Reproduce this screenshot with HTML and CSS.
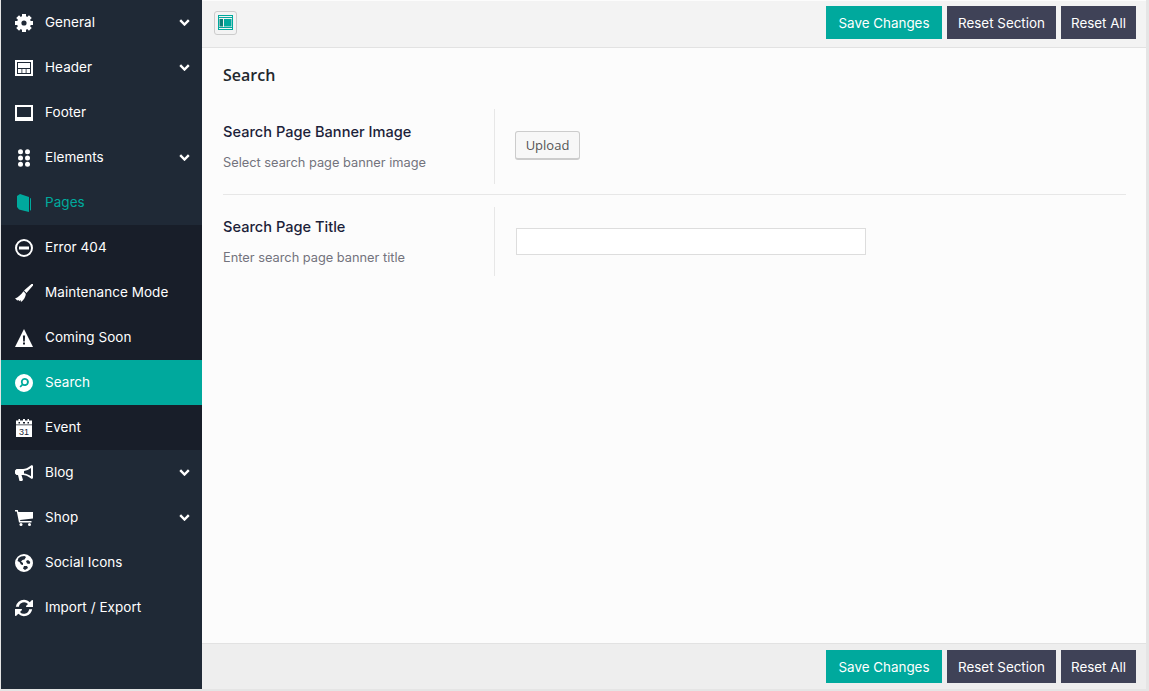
FILE: index.html
```html
<!DOCTYPE html>
<html lang="en">
<head>
    <meta charset="UTF-8">
    <meta name="viewport" content="width=device-width, initial-scale=1.0">
    <title>Theme Options</title>
    <link rel="stylesheet" href="styles.css">
</head>
<body>
    <div class="panel">
        <nav class="sidebar">
            <a class="nav-item">
                <svg class="nav-icon" viewBox="0 0 18 18"><circle class="gear-ring" cx="9" cy="9" r="4.800"/><path d="M7 0h4v3.500H7zM7 14.500h4V18H7z"/><path d="M7 0h4v3.500H7zM7 14.500h4V18H7z" transform="rotate(45 9 9)"/><path d="M7 0h4v3.500H7zM7 14.500h4V18H7z" transform="rotate(90 9 9)"/><path d="M7 0h4v3.500H7zM7 14.500h4V18H7z" transform="rotate(135 9 9)"/></svg>
                <span class="nav-label">General</span>
                <svg class="nav-arrow" viewBox="0 0 11 7"><path d="M1.200 1.200 5.500 5.500 9.800 1.200"/></svg>
            </a>
            <a class="nav-item">
                <svg class="nav-icon" viewBox="0 0 18 16"><path fill-rule="evenodd" d="M0 0h18v16H0zM2 2v12h14V2zM3 3h12v5H3zM3 9h3.500v4H3zM7.300 9h3.400v4H7.300zM11.500 9H15v4h-3.500z"/></svg>
                <span class="nav-label">Header</span>
                <svg class="nav-arrow" viewBox="0 0 11 7"><path d="M1.200 1.200 5.500 5.500 9.800 1.200"/></svg>
            </a>
            <a class="nav-item">
                <svg class="nav-icon" viewBox="0 0 18 16"><path fill-rule="evenodd" d="M0 0h18v16H0zM2 2v10h14V2z"/></svg>
                <span class="nav-label">Footer</span>
            </a>
            <a class="nav-item">
                <svg class="nav-icon" viewBox="0 0 18 18"><circle cx="5.500" cy="2.800" r="2.500"/><circle cx="12.500" cy="2.800" r="2.500"/><circle cx="5.500" cy="9" r="2.500"/><circle cx="12.500" cy="9" r="2.500"/><circle cx="5.500" cy="15.200" r="2.500"/><circle cx="12.500" cy="15.200" r="2.500"/></svg>
                <span class="nav-label">Elements</span>
                <svg class="nav-arrow" viewBox="0 0 11 7"><path d="M1.200 1.200 5.500 5.500 9.800 1.200"/></svg>
            </a>
            <a class="nav-item nav-open">
                <svg class="nav-icon" viewBox="0 0 18 18"><path d="M2 2 5 0l9 3v15L4 15.500 2 13zM15 4l1 .5V16l-1 .8z"/></svg>
                <span class="nav-label">Pages</span>
            </a>
            <div class="subnav">
                <a class="nav-item">
                    <svg class="nav-icon" viewBox="0 0 18 18"><path fill-rule="evenodd" d="M9 0a9 9 0 1 1 0 18A9 9 0 0 1 9 0zm0 2a7 7 0 1 0 0 14A7 7 0 0 0 9 2zM4 7.500h10v3H4z"/></svg>
                    <span class="nav-label">Error 404</span>
                </a>
                <a class="nav-item">
                    <svg class="nav-icon" viewBox="0 0 18 18"><path d="M18 0v1.500L11.500 9 9 6.500 16.500 0zM8.500 7.300l2.300 2.500c0 3-2.300 6.700-4.800 8.200l-.5-2-1.300 1.300-.7-1.300-1.300.6L1 15.200 0 14.500c3-1 6-3.500 8.500-7.200z"/></svg>
                    <span class="nav-label">Maintenance Mode</span>
                </a>
                <a class="nav-item">
                    <svg class="nav-icon" viewBox="0 0 18 18"><path fill-rule="evenodd" d="M9 0l9 18H0zM7.900 6.500l.3 6h1.600l.3-6zM8 13.500v2h2v-2z"/></svg>
                    <span class="nav-label">Coming Soon</span>
                </a>
                <a class="nav-item nav-active">
                    <svg class="nav-icon" viewBox="0 0 18 18"><path fill-rule="evenodd" d="M9 0a9 9 0 1 1 0 18A9 9 0 0 1 9 0zm.8 4a4 4 0 0 0-3.300 6.300L4.500 12.500l1.200 1.100 2.100-2.200A4 4 0 1 0 9.800 4zm0 1.800a2.200 2.200 0 1 1 0 4.400 2.200 2.200 0 0 1 0-4.400z"/></svg>
                    <span class="nav-label">Search</span>
                </a>
                <a class="nav-item">
                    <svg class="nav-icon" viewBox="0 0 16 18"><path fill-rule="evenodd" d="M0 1.500h2.500V0h1.500v1.500h3V0h2v1.500h2.500V0h1.500v1.500H16V18H0zM2.500 3v1.500h1.500V3zM7 3v1.500h2V3zM11.500 3v1.500H13V3zM0 5.500v.8h16v-.8z"/><text class="cal-day" x="8" y="15.800" text-anchor="middle">31</text></svg>
                    <span class="nav-label">Event</span>
                </a>
            </div>
            <a class="nav-item">
                <svg class="nav-icon" viewBox="0 0 18 16"><path fill-rule="evenodd" d="M17 0l1 1v12l-1 1-1-.5C13 11 10 10 8 10H6.500l1.500 5-1 1H4.500L3 10H1.500L0 8.500v-3L1.500 4H8c2 0 5-1 8-3.500zM16 3c-2 1.500-4.500 2.500-7 3v2.500c2.500.3 5 1.300 7 2.800z"/></svg>
                <span class="nav-label">Blog</span>
                <svg class="nav-arrow" viewBox="0 0 11 7"><path d="M1.200 1.200 5.500 5.500 9.800 1.200"/></svg>
            </a>
            <a class="nav-item">
                <svg class="nav-icon" viewBox="0 0 18 16"><path d="M0 0h2.800l.5 2H18v6.500L5 10l.3 1h11.200v1.500H4L1.800 1.500H0z"/><circle cx="6" cy="14.500" r="1.500"/><circle cx="14.500" cy="14.500" r="1.500"/></svg>
                <span class="nav-label">Shop</span>
                <svg class="nav-arrow" viewBox="0 0 11 7"><path d="M1.200 1.200 5.500 5.500 9.800 1.200"/></svg>
            </a>
            <a class="nav-item">
                <svg class="nav-icon" viewBox="0 0 18 18"><path fill-rule="evenodd" d="M9 0a9 9 0 1 1 0 18A9 9 0 0 1 9 0zM6 2.500 3.500 4 2.500 7l2 1 1.500 2.500 2 .5V9l-2-1.500L7.500 6l2-.5L11 3 9.500 2zM13 6l-2 1 1 2.500 2.500.5.800-2zM9 12l-1 2.500 2 1.500 3-2-1-2z"/></svg>
                <span class="nav-label">Social Icons</span>
            </a>
            <a class="nav-item">
                <svg class="nav-icon" viewBox="0 0 18 18"><path d="M9 .8c2.300 0 4.300 1 5.700 2.400L17 1l1 .2v6.800h-6.800l-.2-1 2-2A5.200 5.200 0 0 0 3.900 7.800H.8A8.300 8.300 0 0 1 9 .8zM0 10h6.800l.2 1-2 2a5.200 5.200 0 0 0 9.100-2.800h3.100A8.300 8.300 0 0 1 3.300 14.800L1 17l-1-.2z"/></svg>
                <span class="nav-label">Import / Export</span>
            </a>
        </nav>
        <main class="content">
            <div class="bar bar-top">
                <button class="layout-toggle" type="button">
                    <svg viewBox="0 0 15 15" width="15" height="15"><path fill="#00a99d" fill-rule="evenodd" d="M0 0h15v15H0zM1 1v1h13V1zM1 3v9h13V3zM1 13v1h13v-1z"/><path fill="#00a99d" d="M6 4h7.500v7.500H6z"/><path fill="#0b7f78" d="M1.500 4H5v7.500H1.500z"/></svg>
                </button>
                <div class="bar-actions">
                    <button class="btn btn-save" type="button">Save Changes</button>
                    <button class="btn btn-reset btn-section" type="button">Reset Section</button>
                    <button class="btn btn-reset btn-all" type="button">Reset All</button>
                </div>
            </div>
            <div class="section">
                <h2 class="section-title">Search</h2>
                <div class="field">
                    <div class="field-info">
                        <h3 class="field-name">Search Page Banner Image</h3>
                        <p class="field-desc">Select search page banner image</p>
                    </div>
                    <div class="field-control field-control-upload">
                        <button class="upload" type="button">Upload</button>
                    </div>
                </div>
                <div class="field field-last">
                    <div class="field-info">
                        <h3 class="field-name">Search Page Title</h3>
                        <p class="field-desc">Enter search page banner title</p>
                    </div>
                    <div class="field-control">
                        <input class="text-input" type="text">
                    </div>
                </div>
            </div>
            <div class="bar bar-bottom">
                <div class="bar-actions">
                    <button class="btn btn-save" type="button">Save Changes</button>
                    <button class="btn btn-reset btn-section" type="button">Reset Section</button>
                    <button class="btn btn-reset btn-all" type="button">Reset All</button>
                </div>
            </div>
        </main>
    </div>
</body>
</html>
```

FILE: styles.css
```css
html, body {
    height: 100%;
}
body {
    margin: 0;
    overflow: hidden;
    background-color: #e5e5e5;
    font-family: "Inter", Arial, sans-serif;
    font-size: 13px;
}
.panel {
    display: flex;
    height: 689px;
    margin: 0 3px 0 1px;
}
.sidebar {
    width: 201px;
    flex-shrink: 0;
    background-color: #1f2936;
}
.nav-item {
    display: flex;
    align-items: center;
    height: 45px;
    padding: 0 12px 0 14px;
    color: #fff;
}
.nav-icon {
    width: 18px;
    height: 18px;
    margin-right: 12px;
    fill: #fff;
    flex-shrink: 0;
}
.nav-label {
    flex: 1;
    padding-bottom: 2px;
    font-size: 13.500px;
    letter-spacing: 0.05px;
}
.nav-arrow {
    width: 11px;
    height: 7px;
    fill: none;
    stroke: #fff;
    stroke-width: 2.400;
}
.gear-ring {
    fill: none;
    stroke: #fff;
    stroke-width: 4.400;
}
.nav-open {
    color: #00a99d;
}
.nav-open .nav-icon {
    fill: #00a99d;
}
.subnav {
    background-color: #181e29;
}
.nav-active {
    background-color: #00a99d;
}
.cal-day {
    font-family: "Liberation Sans", Arial, sans-serif;
    font-size: 9px;
    fill: #1c1f3a;
}
.content {
    flex: 1;
    display: flex;
    flex-direction: column;
    background-color: #fcfcfc;
}
.bar {
    display: flex;
    align-items: center;
    flex-shrink: 0;
    padding: 0 10px 0 12px;
}
.bar-top {
    height: 43px;
    margin-top: 1px;
    padding-bottom: 3px;
    justify-content: space-between;
    background-color: #f3f3f3;
    border-bottom: 1px solid #e2e2e2;
}
.bar-bottom {
    height: 45px;
    justify-content: flex-end;
    background-color: #eeeeee;
    border-top: 1px solid #e2e2e2;
}
.bar-actions {
    display: flex;
    gap: 5px;
}
.layout-toggle {
    display: flex;
    align-items: center;
    justify-content: center;
    width: 23px;
    height: 24px;
    padding: 0;
    background-color: #f3f3f3;
    border: 1px solid #cccccc;
    border-radius: 3px;
}
.btn {
    width: 116px;
    height: 33px;
    padding: 0;
    border: none;
    color: #fff;
    font-family: "Inter", Arial, sans-serif;
    font-size: 13.400px;
}
.btn-save {
    background-color: #00a99d;
}
.btn-reset {
    background-color: #3f4257;
}
.btn-section {
    width: 109px;
}
.btn-all {
    width: 75px;
}
.section {
    flex: 1;
    padding: 0 20px 0 21px;
}
.section-title {
    margin: 17px 0 24px;
    color: #23282d;
    font-family: "Open Sans", Arial, sans-serif;
    font-size: 16px;
    font-weight: 600;
    line-height: 20px;
}
.field {
    display: flex;
    padding-bottom: 10px;
    margin-bottom: 12px;
    border-bottom: 1px solid #e7e7e7;
}
.field-last {
    border-bottom: none;
}
.field-info {
    width: 271px;
    height: 75px;
    border-right: 1px solid #e7e7e7;
}
.field-last .field-info {
    height: 69px;
}
.field-name {
    margin: 13px 0 0;
    color: #1c1f3a;
    font-size: 14.600px;
    font-weight: 500;
    line-height: 20px;
}
.field-last .field-name {
    margin-top: 10px;
}
.field-desc {
    margin: 12px 0 0;
    color: #73737d;
    font-size: 12.800px;
    line-height: 18px;
}
.field-control {
    padding-left: 20px;
    display: flex;
    align-items: center;
}
.field-control-upload {
    padding-bottom: 2px;
}
.upload {
    width: 65px;
    height: 29px;
    padding: 0;
    background-color: #f7f7f7;
    border: 1px solid #cccccc;
    border-bottom-width: 2px;
    border-radius: 3px;
    color: #555555;
    font-family: "Open Sans", Arial, sans-serif;
    font-size: 13px;
}
.text-input {
    width: 350px;
    height: 27px;
    margin-left: 1px;
    box-sizing: border-box;
    background-color: #ffffff;
    border: 1px solid #dddddd;
}
```
